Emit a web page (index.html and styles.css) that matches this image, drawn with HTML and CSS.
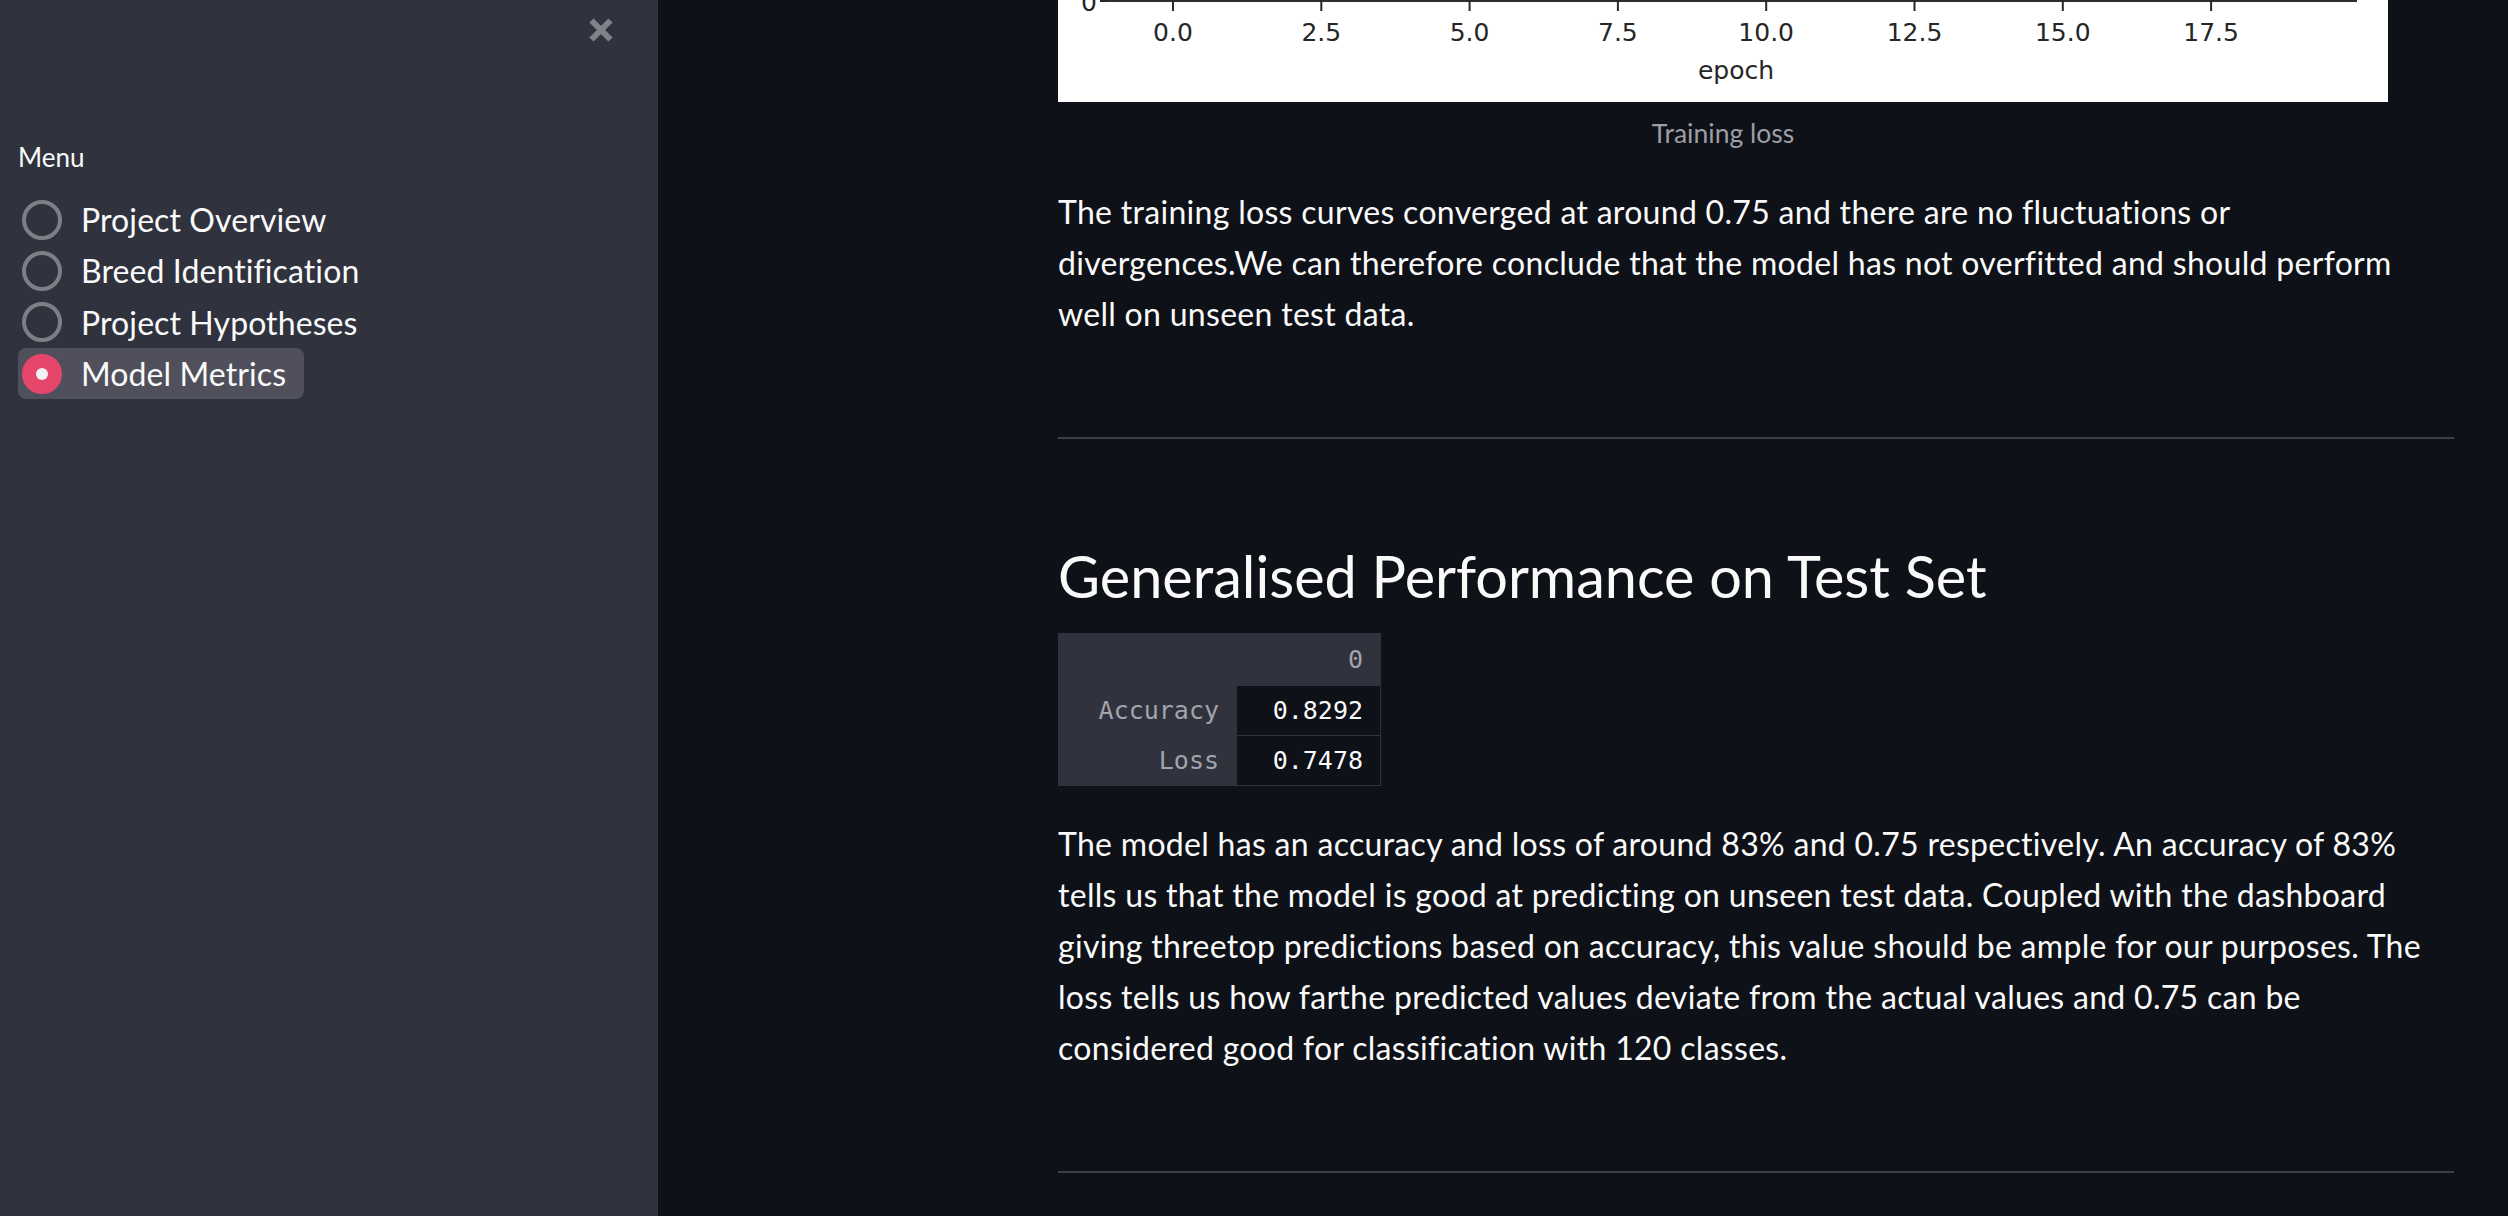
FILE: index.html
```html
<!DOCTYPE html>
<html lang="en">
<head>
<meta charset="utf-8">
<title>Model Metrics</title>
<link rel="stylesheet" href="styles.css">
</head>
<body>
<div class="app">
  <aside class="sidebar">
    <div class="sidebar-top">
      <button class="close-btn" aria-label="Close sidebar">
        <svg class="close-icon" width="28" height="28" viewBox="0 0 28 28"><path d="M4.5 4.5 L23.5 23.5 M23.5 4.5 L4.5 23.5"/></svg>
      </button>
    </div>
    <div class="menu-label">Menu</div>
    <div class="radio-group" role="radiogroup">
      <label class="radio"><span class="radio-dot"></span><span class="radio-text">Project Overview</span></label>
      <label class="radio"><span class="radio-dot"></span><span class="radio-text">Breed Identification</span></label>
      <label class="radio"><span class="radio-dot"></span><span class="radio-text">Project Hypotheses</span></label>
      <label class="radio selected"><span class="radio-dot"></span><span class="radio-text">Model Metrics</span></label>
    </div>
  </aside>
  <main class="main">
    <div class="block">
      <figure class="figure">
        <svg class="chart" width="1330" height="102" viewBox="0 0 1330 102">
          <rect class="chart-bg" x="0" y="0" width="1330" height="102"/>
          <text class="ytick-label" x="39" y="11">0</text>
          <line class="tick" x1="42" y1="1" x2="49" y2="1"/>
          <rect class="spine" x="49" y="-1" width="1250" height="3"/>
          <g class="ticks">
            <line class="tick" x1="115" y1="0" x2="115" y2="11"/>
            <line class="tick" x1="263.3" y1="0" x2="263.3" y2="11"/>
            <line class="tick" x1="411.6" y1="0" x2="411.6" y2="11"/>
            <line class="tick" x1="559.9" y1="0" x2="559.9" y2="11"/>
            <line class="tick" x1="708.2" y1="0" x2="708.2" y2="11"/>
            <line class="tick" x1="856.5" y1="0" x2="856.5" y2="11"/>
            <line class="tick" x1="1004.8" y1="0" x2="1004.8" y2="11"/>
            <line class="tick" x1="1153.1" y1="0" x2="1153.1" y2="11"/>
          </g>
          <g class="xtick-labels">
            <text x="115" y="41">0.0</text>
            <text x="263.3" y="41">2.5</text>
            <text x="411.6" y="41">5.0</text>
            <text x="559.9" y="41">7.5</text>
            <text x="708.2" y="41">10.0</text>
            <text x="856.5" y="41">12.5</text>
            <text x="1004.8" y="41">15.0</text>
            <text x="1153.1" y="41">17.5</text>
          </g>
          <text class="axis-label" x="678" y="79">epoch</text>
        </svg>
        <figcaption class="caption">Training loss</figcaption>
      </figure>
      <p class="text">The training loss curves converged at around 0.75 and there are no fluctuations or<br>divergences.We can therefore conclude that the model has not overfitted and should perform<br>well on unseen test data.</p>
      <hr class="divider">
      <h2 class="heading">Generalised Performance on Test Set</h2>
      <table class="metrics">
        <thead>
          <tr><th class="corner"></th><th class="col-head">0</th></tr>
        </thead>
        <tbody>
          <tr><th class="row-head">Accuracy</th><td class="cell">0.8292</td></tr>
          <tr><th class="row-head">Loss</th><td class="cell">0.7478</td></tr>
        </tbody>
      </table>
      <p class="text text-after-table">The model has an accuracy and loss of around 83% and 0.75 respectively. An accuracy of 83%<br>tells us that the model is good at predicting on unseen test data. Coupled with the dashboard<br>giving threetop predictions based on accuracy, this value should be ample for our purposes. The<br>loss tells us how farthe predicted values deviate from the actual values and 0.75 can be<br>considered good for classification with 120 classes.</p>
      <hr class="divider">
    </div>
  </main>
</div>
</body>
</html>
```
FILE: styles.css
```css
html, body {
  margin: 0;
  padding: 0;
  height: 1216px;
  overflow: hidden;
  background: #0e1117;
}

.app {
  display: flex;
  height: 1216px;
  font-family: "Lato", "Noto Sans", sans-serif;
  color: #fafafa;
}

/* ---------- Sidebar ---------- */
.sidebar {
  width: 658px;
  flex: 0 0 658px;
  height: 1216px;
  background: #30323e;
  padding-left: 18px;
  box-sizing: border-box;
}

.sidebar-top {
  display: flex;
  justify-content: flex-end;
  padding: 16px 43px 0 0;
}

.close-btn {
  display: block;
  width: 28px;
  height: 28px;
  padding: 0;
  border: 0;
  background: none;
}

.close-icon {
  display: block;
}

.close-icon path {
  stroke: #818289;
  stroke-width: 6;
  fill: none;
}

.menu-label {
  margin-top: 95px;
  font-size: 26px;
  line-height: 36px;
  color: #fafafa;
}

.radio-group {
  margin-top: 19px;
  display: flex;
  flex-direction: column;
  align-items: flex-start;
}

.radio {
  display: flex;
  align-items: center;
  gap: 19px;
  height: 51.3px;
  padding: 0 18px 0 4px;
  border-radius: 8px;
  font-size: 32px;
  letter-spacing: 0.1px;
  font-variant-ligatures: none;
  color: #fafafa;
}

.radio.selected {
  background: #4f505c;
}

.radio-dot {
  width: 40px;
  height: 40px;
  box-sizing: border-box;
  border: 4px solid #7e7f86;
  border-radius: 50%;
  display: flex;
  align-items: center;
  justify-content: center;
}

.radio.selected .radio-dot {
  background: #e4476b;
  border-color: #e4476b;
}

.radio.selected .radio-dot::after {
  content: "";
  width: 12px;
  height: 12px;
  border-radius: 50%;
  background: #f0f2f6;
}

/* ---------- Main ---------- */
.main {
  flex: 1;
  padding-left: 400px;
}

.block {
  width: 1396px;
}

.figure {
  margin: 0;
  width: 1330px;
}

.chart {
  display: block;
}

.chart-bg {
  fill: #ffffff;
}

.spine {
  fill: #2e2e2e;
}

.tick {
  stroke: #262626;
  stroke-width: 2;
}

.ytick-label {
  font: 25px "DejaVu Sans", sans-serif;
  fill: #262626;
  text-anchor: end;
}

.xtick-labels text {
  font: 25px "DejaVu Sans", sans-serif;
  fill: #262626;
  text-anchor: middle;
}

.axis-label {
  font: 25px "DejaVu Sans", sans-serif;
  fill: #262626;
  text-anchor: middle;
}

.caption {
  margin-top: 13px;
  text-align: center;
  font-size: 26.5px;
  line-height: 36px;
  color: #9d9ea6;
}

.text {
  margin: 35px 0 0;
  font-size: 32px;
  letter-spacing: 0.3px;
  font-variant-ligatures: none;
  line-height: 51.2px;
  color: #fafafa;
}

.text-after-table {
  margin-top: 32px;
}

.divider {
  margin: 97px 0 0;
  border: 0;
  height: 2px;
  background: #3d3f48;
}

.heading {
  margin: 103px 0 0;
  font-size: 57.6px;
  line-height: 68px;
  font-weight: 400;
  color: #fafafa;
}

.metrics {
  margin-top: 23px;
  border-collapse: collapse;
  font: 25px "DejaVu Sans Mono", monospace;
}

.metrics th,
.metrics td {
  border: 1px solid #30323e;
  padding: 0 17px 0 0;
  text-align: right;
  vertical-align: middle;
  font-weight: 400;
}

.metrics thead th {
  height: 51px;
  background: #30323e;
  color: #a3a4ab;
}

.metrics .corner,
.metrics .row-head {
  width: 160px;
}

.metrics .row-head {
  height: 49px;
  background: #30323e;
  color: #a3a4ab;
}

.metrics .col-head,
.metrics .cell {
  width: 126px;
}

.metrics .cell {
  height: 49px;
  color: #fafafa;
}
```
